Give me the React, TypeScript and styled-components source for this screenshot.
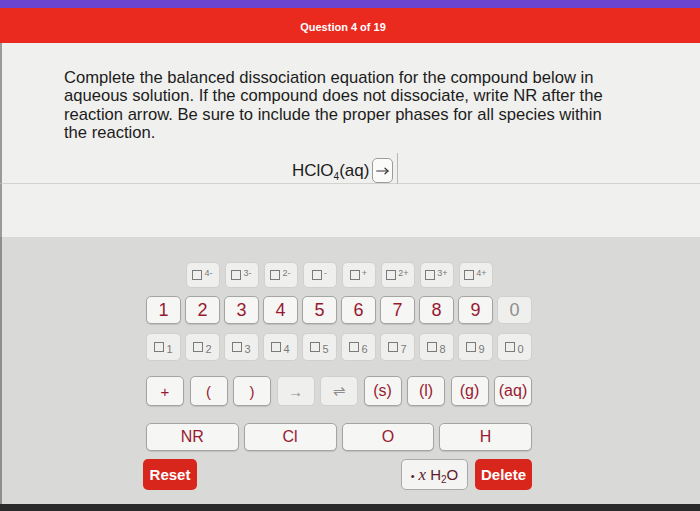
import React from 'react';
import styled, { createGlobalStyle } from 'styled-components';

const Global = createGlobalStyle`
  html, body { margin: 0; padding: 0; }
  body {
    width: 700px;
    height: 511px;
    overflow: hidden;
    background: #2a2a2a;
    font-family: "Liberation Sans", Arial, sans-serif;
  }
`;

const Page = styled.div`
  width: 700px;
  height: 511px;
  display: flex;
  flex-direction: column;
  background: #2a2a2a;
`;

const TopStrip = styled.div`
  flex: none;
  height: 8px;
  background: #6a45d1;
`;

const Header = styled.header`
  flex: none;
  height: 35px;
  background: #ea2a1f;
  display: flex;
  align-items: center;
  justify-content: center;
  padding: 3px 14px 0 0;
  box-sizing: border-box;
  color: #ffffff;
  font-size: 11px;
  font-weight: 700;
`;

const Question = styled.section`
  flex: none;
  height: 141px;
  box-sizing: border-box;
  padding: 26px 0 0 62px;
  background: #f0f0ee;
  border-bottom: 1px solid #d2d2d0;
  border-left: 2px solid #9a9a98;
`;

const Prompt = styled.p`
  margin: 0;
  width: 545px;
  font-size: 16.6px;
  line-height: 18.4px;
  color: #1c1c1c;
`;

const Equation = styled.div`
  margin: 15px 0 0 228px;
  height: 26px;
  display: flex;
  align-items: center;
  font-size: 17px;
  color: #1c1c1c;
`;

const Formula = styled.span`
  sub { font-size: 10px; vertical-align: -4px; line-height: 0; }
`;

const AnswerBox = styled.span`
  margin-left: 3px;
  width: 21px;
  height: 25px;
  box-sizing: border-box;
  border: 1px solid #9c9c9a;
  border-radius: 5px;
  background: #fbfbfa;
  display: flex;
  align-items: center;
  justify-content: center;
  color: #333;
`;

const Caret = styled.span`
  margin-left: 4px;
  width: 1px;
  height: 31px;
  background: #b8b8b6;
  align-self: flex-end;
`;

const Gap = styled.div`
  flex: none;
  height: 53px;
  background: #f0f0ee;
  border-left: 2px solid #9a9a98;
`;

const Panel = styled.section`
  flex: none;
  height: 267px;
  box-sizing: border-box;
  padding: 25px 0 0 144px;
  background: #d9d9d7;
  border-left: 2px solid #8e8e8c;
`;

const Keypad = styled.div`
  width: 386px;
  display: flex;
  flex-direction: column;
`;

const ChargeRow = styled.div`
  display: flex;
  justify-content: center;
  gap: 5px;
`;

const Grid = styled.div<{ $cols: number; $gap: number; $top: number }>`
  display: grid;
  grid-template-columns: repeat(${p => p.$cols}, 1fr);
  gap: ${p => p.$gap}px;
  margin-top: ${p => p.$top}px;
`;

const Key = styled.button<{ $active?: boolean; $h: number; $w?: number; $size?: number }>`
  height: ${p => p.$h}px;
  ${p => (p.$w ? `width: ${p.$w}px;` : '')}
  box-sizing: border-box;
  padding: 0;
  border: 1px solid ${p => (p.$active ? '#a4a4a2' : '#d0d0ce')};
  border-radius: 5px;
  background: ${p => (p.$active ? '#f6f6f4' : '#efefed')};
  box-shadow: ${p => (p.$active ? '0 1px 1px rgba(0,0,0,0.12)' : 'none')};
  color: ${p => (p.$active ? '#971a31' : '#8e8e8e')};
  font-family: "Liberation Sans", Arial, sans-serif;
  font-size: ${p => p.$size ?? 17}px;
  display: flex;
  align-items: center;
  justify-content: center;
`;

const Box = styled.span`
  display: inline-block;
  width: 10px;
  height: 10px;
  box-sizing: border-box;
  border: 1px solid #7a7a7a;
`;

const Sup = styled.span`
  font-size: 9px;
  color: #7a7a7a;
  margin-left: 2px;
  align-self: flex-start;
  margin-top: 5px;
`;

const Sub = styled.span`
  font-size: 11px;
  color: #7a7a7a;
  margin-left: 2px;
  align-self: flex-end;
  margin-bottom: 5px;
`;

const ActionRow = styled.div`
  display: flex;
  align-items: center;
  gap: 7px;
  margin-top: 8px;
`;

const Spacer = styled.div`
  flex: 1;
`;

const RedButton = styled.button<{ $w: number; $shift?: number }>`
  width: ${p => p.$w}px;
  height: 31px;
  margin-left: ${p => p.$shift ?? 0}px;
  padding: 0;
  border: none;
  border-radius: 5px;
  background: #d9261c;
  color: #ffffff;
  font-family: "Liberation Sans", Arial, sans-serif;
  font-size: 15px;
  font-weight: 700;
`;

const WaterKey = styled.button`
  width: 67px;
  height: 31px;
  padding: 0;
  box-sizing: border-box;
  border: 1px solid #a9a9a7;
  border-radius: 5px;
  background: #f4f4f2;
  color: #5e1a2a;
  font-family: "Liberation Sans", Arial, sans-serif;
  font-size: 15px;
`;

const WaterLabel = styled.span`
  sub { font-size: 10px; vertical-align: -3px; line-height: 0; }
`;

const Dot = styled.span`
  font-size: 11px;
  margin-right: 4px;
`;

const Ital = styled.span`
  font-family: "Liberation Serif", "Times New Roman", serif;
  font-style: italic;
  font-size: 17px;
  margin-right: 4px;
`;

const Footer = styled.div`
  flex: 1;
  background: #2a2a2a;
`;

const charges = ['4-', '3-', '2-', '-', '+', '2+', '3+', '4+'];
const digits = ['1', '2', '3', '4', '5', '6', '7', '8', '9', '0'];
const symbols: { label: string; active: boolean }[] = [
  { label: '+', active: true },
  { label: '(', active: true },
  { label: ')', active: true },
  { label: '→', active: false },
  { label: '⇌', active: false },
  { label: '(s)', active: true },
  { label: '(l)', active: true },
  { label: '(g)', active: true },
  { label: '(aq)', active: true },
];
const elements = ['NR', 'Cl', 'O', 'H'];

function ArrowIcon() {
  return (
    <svg width="13" height="8" viewBox="0 0 13 8" fill="none" stroke="#333" strokeWidth="1.2" strokeLinecap="round" strokeLinejoin="round">
      <path d="M0.8 4H12" />
      <path d="M9 1.2L12 4L9 6.8" />
    </svg>
  );
}

export default function App() {
  return (
    <Page>
      <Global />
      <TopStrip />
      <Header>Question 4 of 19</Header>
      <Question>
        <Prompt>
          Complete the balanced dissociation equation for the compound below in aqueous solution. If the
          compound does not dissociate, write NR after the reaction arrow. Be sure to include the proper
          phases for all species within the reaction.
        </Prompt>
        <Equation>
          <Formula>
            HClO<sub>4</sub>(aq)
          </Formula>
          <AnswerBox>
            <ArrowIcon />
          </AnswerBox>
          <Caret />
        </Equation>
      </Question>
      <Gap />
      <Panel>
        <Keypad>
          <ChargeRow>
            {charges.map(c => (
              <Key key={c} $h={26} $w={34}>
                <Box />
                <Sup>{c}</Sup>
              </Key>
            ))}
          </ChargeRow>
          <Grid $cols={10} $gap={4} $top={8}>
            {digits.map(d => (
              <Key key={d} $h={28} $active={d !== '0'} $size={18}>
                {d}
              </Key>
            ))}
          </Grid>
          <Grid $cols={10} $gap={4} $top={9}>
            {digits.map(d => (
              <Key key={d} $h={28}>
                <Box />
                <Sub>{d}</Sub>
              </Key>
            ))}
          </Grid>
          <Grid $cols={9} $gap={5.5} $top={15}>
            {symbols.map(s => (
              <Key key={s.label} $h={30} $active={s.active} $size={s.label.length > 1 && s.active ? 16 : 15}>
                {s.label}
              </Key>
            ))}
          </Grid>
          <Grid $cols={4} $gap={5} $top={17}>
            {elements.map(e => (
              <Key key={e} $h={28} $active $size={16}>
                {e}
              </Key>
            ))}
          </Grid>
          <ActionRow>
            <RedButton $w={54} $shift={-3}>Reset</RedButton>
            <Spacer />
            <WaterKey>
              <WaterLabel>
                <Dot>•</Dot>
                <Ital>x</Ital>H<sub>2</sub>O
              </WaterLabel>
            </WaterKey>
            <RedButton $w={57}>Delete</RedButton>
          </ActionRow>
        </Keypad>
      </Panel>
      <Footer />
    </Page>
  );
}
